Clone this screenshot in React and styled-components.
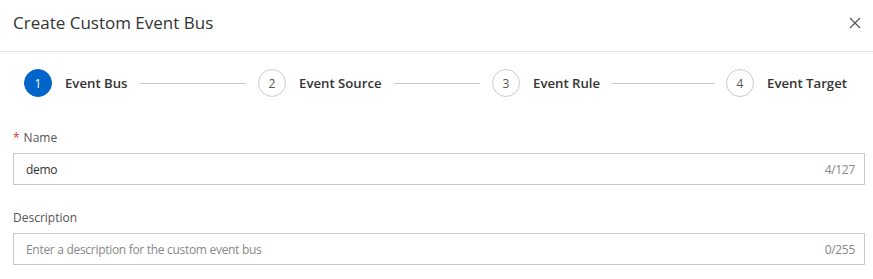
import React from 'react';
import styled, { createGlobalStyle } from 'styled-components';

const GlobalStyle = createGlobalStyle`
  html, body {
    margin: 0;
    padding: 0;
    background: #fff;
  }
  body {
    font-family: 'Open Sans', 'Noto Sans', 'Liberation Sans', sans-serif;
    color: #333;
  }
`;

const STEPS = ['Event Bus', 'Event Source', 'Event Rule', 'Event Target'];

const FIELDS = [
  {
    label: 'Name',
    required: true,
    value: 'demo',
    placeholder: '',
    max: 127,
  },
  {
    label: 'Description',
    required: false,
    value: '',
    placeholder: 'Enter a description for the custom event bus',
    max: 255,
  },
];

export default function App() {
  return (
    <>
      <GlobalStyle />
      <Dialog>
        <Header>
          <Title>Create Custom Event Bus</Title>
          <CloseButton aria-label="close">
            <svg width="12" height="12" viewBox="0 0 12 12">
              <path
                d="M1 1L11 11M11 1L1 11"
                stroke="#555"
                strokeWidth="1.2"
                fill="none"
              />
            </svg>
          </CloseButton>
        </Header>
        <Body>
          <Steps>
            {STEPS.map((step, index) => (
              <Step key={step} last={index === STEPS.length - 1}>
                <StepIcon active={index === 0}>{index + 1}</StepIcon>
                <StepTitle>{step}</StepTitle>
                {index < STEPS.length - 1 && <StepLine />}
              </Step>
            ))}
          </Steps>
          <Form>
            {FIELDS.map(field => (
              <Field key={field.label}>
                <Label>
                  {field.required && <Required>*</Required>}
                  {field.label}
                </Label>
                <InputWrap>
                  <Input
                    defaultValue={field.value}
                    placeholder={field.placeholder}
                  />
                  <Counter>
                    {field.value.length}/{field.max}
                  </Counter>
                </InputWrap>
              </Field>
            ))}
          </Form>
        </Body>
      </Dialog>
    </>
  );
}

const Dialog = styled.div`
  width: 873px;
  height: 279px;
  background: #fff;
  overflow: hidden;
`;

const Header = styled.div`
  display: flex;
  align-items: center;
  justify-content: space-between;
  height: 52px;
  padding: 0 11px 0 13px;
  border-bottom: 1px solid #e5e5e5;
  box-sizing: border-box;
`;

const Title = styled.h2`
  margin: 0 0 6px;
  font-size: 17px;
  font-weight: 400;
  color: #333;
`;

const CloseButton = styled.button`
  display: flex;
  align-items: center;
  justify-content: center;
  width: 14px;
  height: 14px;
  padding: 0;
  margin-bottom: 6px;
  border: none;
  background: transparent;
  cursor: pointer;
`;

const Body = styled.div`
  padding: 16px 8px 0 13px;
`;

const Steps = styled.div`
  display: flex;
  align-items: center;
  padding: 0 18px 0 11px;
  height: 30px;
`;

const Step = styled.div`
  display: flex;
  align-items: center;
  flex: ${p => (p.last ? '0 0 auto' : '1 1 0')};
`;

const StepIcon = styled.div`
  display: flex;
  align-items: center;
  justify-content: center;
  flex: none;
  width: 28px;
  height: 28px;
  border-radius: 50%;
  box-sizing: border-box;
  font-size: 12px;
  color: ${p => (p.active ? '#fff' : '#555')};
  background: ${p => (p.active ? '#0064c8' : '#fff')};
  border: 1px solid ${p => (p.active ? '#0064c8' : '#c8ccd2')};
`;

const StepTitle = styled.div`
  margin-left: 13px;
  font-size: 13.2px;
  font-weight: 600;
  color: #333;
  white-space: nowrap;
`;

const StepLine = styled.div`
  flex: 1;
  height: 1px;
  margin: 0 12px;
  background: #c8ccd2;
`;

const Form = styled.div`
  display: flex;
  flex-direction: column;
  gap: 23px;
  margin-top: 30px;
`;

const Field = styled.div`
  display: flex;
  flex-direction: column;
`;

const Label = styled.label`
  display: flex;
  align-items: center;
  height: 18px;
  margin-bottom: 7px;
  font-size: 12px;
  color: #555;
`;

const Required = styled.span`
  color: #d93026;
  margin-right: 4px;
`;

const InputWrap = styled.div`
  display: flex;
  align-items: center;
  height: 32px;
  box-sizing: border-box;
  padding: 0 9px 0 12px;
  border: 1px solid #c8c8c8;
  background: #fff;
`;

const Input = styled.input`
  flex: 1;
  min-width: 0;
  height: 100%;
  padding: 0;
  border: none;
  outline: none;
  background: transparent;
  font-family: inherit;
  font-size: 12px;
  letter-spacing: -0.3px;
  color: #333;

  &::placeholder {
    color: #888;
  }
`;

const Counter = styled.span`
  margin-left: 8px;
  font-size: 12px;
  letter-spacing: -0.3px;
  color: #888;
`;
